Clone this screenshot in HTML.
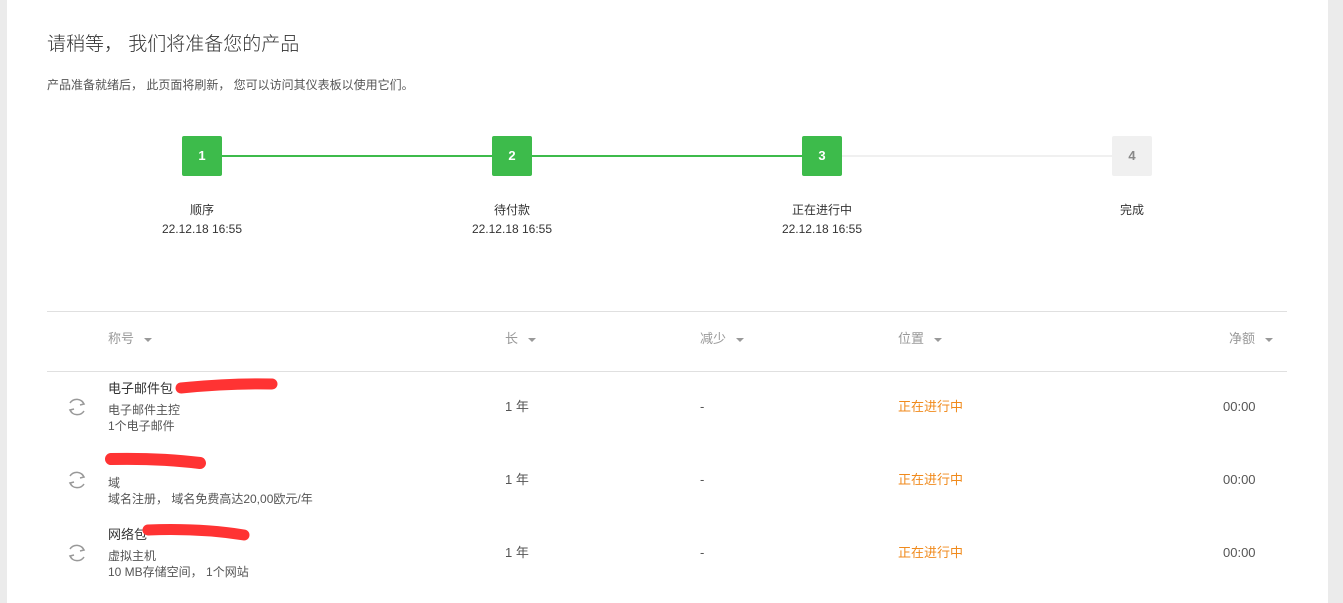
<!DOCTYPE html>
<html><head><meta charset="utf-8"><style>
*{margin:0;padding:0;box-sizing:border-box}
body{width:1343px;height:603px;background:#ebebeb;font-family:"Liberation Sans","Noto Sans CJK SC",sans-serif;position:relative;overflow:hidden;color:#333}
.card{position:absolute;left:7px;top:0;width:1321px;height:603px;background:#fff}
.a{position:absolute;white-space:nowrap}
.box{position:absolute;top:136px;width:40px;height:40px;border-radius:2px;background:#3dbb4b;color:#fff;font-size:13px;font-weight:bold;text-align:center;line-height:40px}
.lbl{position:absolute;width:200px;text-align:center;font-size:12px;color:#333}
.hd{position:absolute;top:331px;font-size:13px;color:#999;line-height:16px}
.tri{display:inline-block;width:0;height:0;border-left:4px solid transparent;border-right:4px solid transparent;border-top:4px solid #999;margin-left:10px;vertical-align:middle}
.c{position:absolute;font-size:13px;color:#555;line-height:16px;white-space:nowrap}
.or{color:#f08a1c}
</style></head><body>
<div class="card"></div>
<div class="a" style="left:47px;top:29px;font-size:19px;color:#333;font-weight:300">请稍等， 我们将准备您的产品</div>
<div class="a" style="left:47px;top:76px;font-size:12px;color:#555">产品准备就绪后， 此页面将刷新， 您可以访问其仪表板以使用它们。</div>
<div class="a" style="left:222px;top:155px;width:890px;height:2px;background:#f0f0f0"></div>
<div class="a" style="left:222px;top:155px;width:580px;height:2px;background:#3dbb4b"></div>
<div class="box" style="left:182px">1</div>
<div class="box" style="left:492px">2</div>
<div class="box" style="left:802px">3</div>
<div class="box" style="left:1112px;background:#f0f0f0;color:#888">4</div>
<div class="lbl" style="left:102px;top:201px">顺序</div><div class="lbl" style="left:102px;top:222px">22.12.18 16:55</div>
<div class="lbl" style="left:412px;top:201px">待付款</div><div class="lbl" style="left:412px;top:222px">22.12.18 16:55</div>
<div class="lbl" style="left:722px;top:201px">正在进行中</div><div class="lbl" style="left:722px;top:222px">22.12.18 16:55</div>
<div class="lbl" style="left:1032px;top:201px">完成</div>
<div class="a" style="left:47px;top:311px;width:1240px;height:1px;background:#e0e0e0"></div>
<div class="a" style="left:47px;top:371px;width:1240px;height:1px;background:#e0e0e0"></div>
<div class="hd" style="left:108px">称号<span class="tri"></span></div>
<div class="hd" style="left:505px">长<span class="tri"></span></div>
<div class="hd" style="left:700px">减少<span class="tri"></span></div>
<div class="hd" style="left:898px">位置<span class="tri"></span></div>
<div class="hd" style="left:1229px">净额<span class="tri"></span></div>

<div class="c" style="left:108px;top:381px;color:#333">电子邮件包</div>
<div class="c" style="left:108px;top:402px;font-size:12px">电子邮件主控</div>
<div class="c" style="left:108px;top:418px;font-size:12px">1个电子邮件</div>
<div class="c" style="left:108px;top:475px;font-size:12px">域</div>
<div class="c" style="left:108px;top:491px;font-size:12px">域名注册， 域名免费高达20,00欧元/年</div>
<div class="c" style="left:108px;top:527px;color:#333">网络包</div>
<div class="c" style="left:108px;top:548px;font-size:12px">虚拟主机</div>
<div class="c" style="left:108px;top:564px;font-size:12px">10 MB存储空间， 1个网站</div>

<svg class="a" style="left:0;top:0" width="1343" height="603">
<g fill="none" stroke="#999" stroke-width="1.5">
<g id="r"><path d="M70 403 A8 8 0 0 1 84 404"/><path d="M84 411 A8 8 0 0 1 70 410"/><path d="M82 401 L84 404 L80 405"/><path d="M72 413 L70 410 L74 409" /></g>
<use href="#r" y="73"/><use href="#r" y="146"/>
</g>
<g stroke="#ff3333" stroke-linecap="round" fill="none">
<path d="M181 388 Q230 383 272 384" stroke-width="11"/>
<path d="M111 459 Q160 458 200 463" stroke-width="12"/>
<path d="M148 530 Q200 528 244 535" stroke-width="11"/>
</g>
</svg>

<div class="c" style="left:505px;top:399px">1 年</div>
<div class="c" style="left:700px;top:399px">-</div>
<div class="c or" style="left:898px;top:399px">正在进行中</div>
<div class="c" style="left:1223px;top:399px">00:00</div>
<div class="c" style="left:505px;top:472px">1 年</div>
<div class="c" style="left:700px;top:472px">-</div>
<div class="c or" style="left:898px;top:472px">正在进行中</div>
<div class="c" style="left:1223px;top:472px">00:00</div>
<div class="c" style="left:505px;top:545px">1 年</div>
<div class="c" style="left:700px;top:545px">-</div>
<div class="c or" style="left:898px;top:545px">正在进行中</div>
<div class="c" style="left:1223px;top:545px">00:00</div>
</body></html>
